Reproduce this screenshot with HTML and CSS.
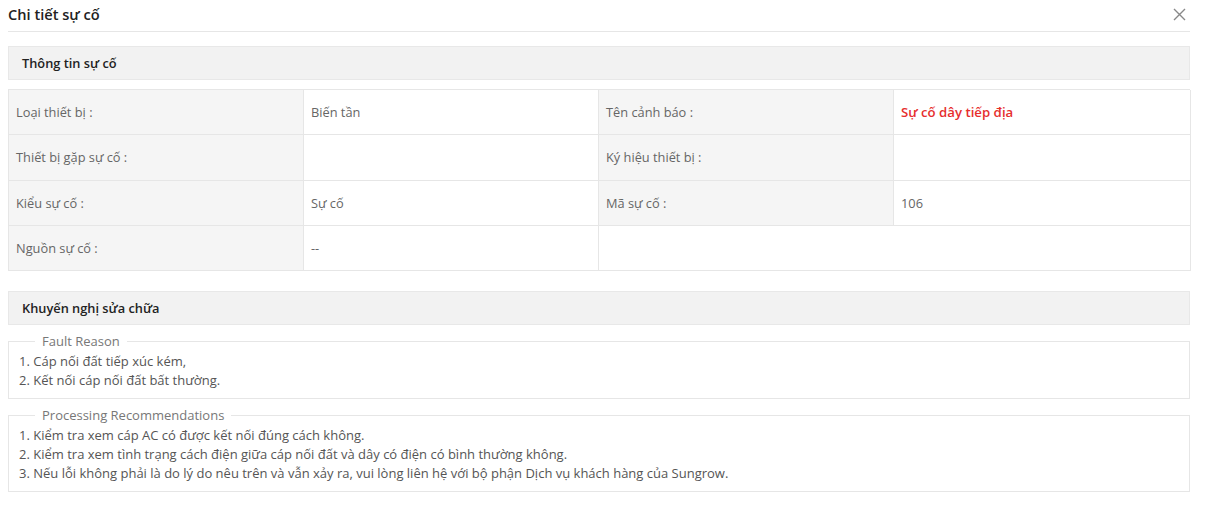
FILE: index.html
```html
<!DOCTYPE html>
<html lang="vi">
<head>
<meta charset="utf-8">
<title>Chi tiết sự cố</title>
<link rel="stylesheet" href="styles.css">
</head>
<body>
<div class="modal">
  <div class="modal-head">
    <div class="modal-title">Chi tiết sự cố</div>
    <svg class="close" width="13" height="13" viewBox="0 0 13 13"><path d="M1 1L12 12M12 1L1 12" stroke="#888" stroke-width="1.4" fill="none"/></svg>
  </div>
  <div class="section-head">Thông tin sự cố</div>
  <div class="info-table">
    <div class="cell label">Loại thiết bị :</div>
    <div class="cell value">Biến tần</div>
    <div class="cell label">Tên cảnh báo :</div>
    <div class="cell value red">Sự cố dây tiếp địa</div>

    <div class="cell label">Thiết bị gặp sự cố :</div>
    <div class="cell value"></div>
    <div class="cell label">Ký hiệu thiết bị :</div>
    <div class="cell value"></div>

    <div class="cell label">Kiểu sự cố :</div>
    <div class="cell value">Sự cố</div>
    <div class="cell label">Mã sự cố :</div>
    <div class="cell value">106</div>

    <div class="cell label">Nguồn sự cố :</div>
    <div class="cell value">--</div>
    <div class="cell value span2"></div>
  </div>
  <div class="section-head second">Khuyến nghị sửa chữa</div>
  <fieldset class="box">
    <legend>Fault Reason</legend>
    <div class="line">1. Cáp nối đất tiếp xúc kém,</div>
    <div class="line">2. Kết nối cáp nối đất bất thường.</div>
  </fieldset>
  <fieldset class="box">
    <legend>Processing Recommendations</legend>
    <div class="line">1. Kiểm tra xem cáp AC có được kết nối đúng cách không.</div>
    <div class="line">2. Kiểm tra xem tình trạng cách điện giữa cáp nối đất và dây có điện có bình thường không.</div>
    <div class="line">3. Nếu lỗi không phải là do lý do nêu trên và vẫn xảy ra, vui lòng liên hệ với bộ phận Dịch vụ khách hàng của Sungrow.</div>
  </fieldset>
</div>
</body>
</html>
```

FILE: styles.css
```css
* { box-sizing: border-box; }
html, body { margin: 0; padding: 0; background: #fff; }
body {
  font-family: "Open Sans", "Noto Sans", "Liberation Sans", sans-serif;
  color: #555;
  font-size: 13px;
}
.modal {
  width: 1182px;
  margin-left: 8px;
}
.modal-head {
  display: flex;
  align-items: center;
  justify-content: space-between;
  height: 32px;
  border-bottom: 1px solid #e6e6e6;
  padding-bottom: 3px;
}
.modal-title {
  font-size: 14.6px;
  font-weight: 600;
  color: #222;
}
.close { margin-right: 4px; }
.section-head {
  margin-top: 14px;
  height: 34px;
  background: #f2f2f2;
  border: 1px solid #e8e8e8;
  padding-left: 13px;
  display: flex;
  align-items: center;
  font-weight: 600;
  color: #222;
  font-size: 12.8px;
}
.section-head.second { margin-top: 20px; }
.info-table {
  margin-top: 9px;
  display: grid;
  grid-template-columns: 295px 295px 295px 297px;
  grid-auto-rows: 45.25px;
  border-top: 1px solid #e6e6e6;
  border-left: 1px solid #e6e6e6;
}
.cell {
  display: flex;
  align-items: center;
  padding-left: 7px;
  border-right: 1px solid #e6e6e6;
  border-bottom: 1px solid #e6e6e6;
  color: #666;
  font-size: 12.8px;
}
.cell.label { background: #f5f5f5; }
.cell.value { background: #fff; }
.cell.red { color: #e62e2e; font-weight: 600; font-size: 13.2px; }
.cell.span2 { grid-column: span 2; }
.box {
  margin: 8px 0 0 0;
  padding: 3px 10px 8px 10px;
  border: 1px solid #e6e6e6;
}
.box + .box { margin-top: 8px; }
.box legend {
  margin-left: 16px;
  padding: 0 7px;
  font-size: 13px;
  color: #777;
  line-height: 16px;
}
.line {
  line-height: 19px;
  color: #555;
  font-size: 13px;
}
```
